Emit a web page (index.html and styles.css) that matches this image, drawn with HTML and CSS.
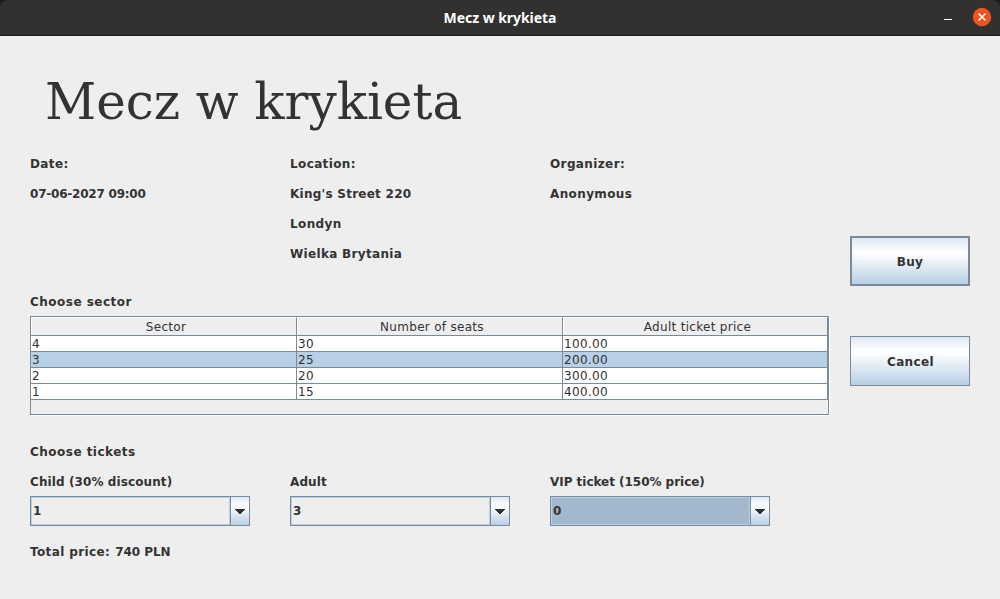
FILE: index.html
```html
<!DOCTYPE html>
<html lang="en">
<head>
<meta charset="utf-8">
<title>Mecz w krykieta</title>
<link rel="stylesheet" href="styles.css">
</head>
<body>
<div class="window">
  <header class="titlebar">
    <span class="caption">Mecz w krykieta</span>
    <div class="controls">
      <span class="minimize"></span>
      <svg class="close" width="20" height="20" viewBox="0 0 20 20"><circle cx="10" cy="10" r="9.2" fill="#e95420"/><path d="M6.5 6.5l7 7M13.5 6.5l-7 7" stroke="#fff" stroke-width="1.5" fill="none"/></svg>
    </div>
  </header>
  <main class="content">
    <section class="details">
      <h1 class="title">Mecz w krykieta</h1>
      <div class="columns info">
        <div class="column"><p>Date:</p><p class="digits">07-06-2027 09:00</p></div>
        <div class="column"><p>Location:</p><p class="street">King's Street 220</p><p>Londyn</p><p class="country">Wielka Brytania</p></div>
        <div class="column"><p>Organizer:</p><p>Anonymous</p></div>
      </div>
      <p class="heading">Choose sector</p>
      <div class="scrollpane">
        <table class="sectors">
          <colgroup><col class="wide"><col class="wide"><col></colgroup>
          <thead><tr><th>Sector</th><th>Number of seats</th><th>Adult ticket price</th></tr></thead>
          <tbody>
            <tr><td>4</td><td>30</td><td>100.00</td></tr>
            <tr class="selected"><td>3</td><td>25</td><td>200.00</td></tr>
            <tr><td>2</td><td>20</td><td>300.00</td></tr>
            <tr><td>1</td><td>15</td><td>400.00</td></tr>
          </tbody>
        </table>
      </div>
      <p class="heading">Choose tickets</p>
      <div class="columns">
        <div class="column"><p class="child">Child (30% discount)</p>
          <div class="combo"><span class="value">1</span><span class="arrow"><svg width="10" height="5" viewBox="0 0 10 5" shape-rendering="crispEdges"><path d="M0 0h10v1H9v1H8v1H7v1H6v1H4V4H3V3H2V2H1V1H0z" fill="#333"/></svg></span></div></div>
        <div class="column"><p class="adult">Adult</p>
          <div class="combo"><span class="value">3</span><span class="arrow"><svg width="10" height="5" viewBox="0 0 10 5" shape-rendering="crispEdges"><path d="M0 0h10v1H9v1H8v1H7v1H6v1H4V4H3V3H2V2H1V1H0z" fill="#333"/></svg></span></div></div>
        <div class="column"><p class="vip">VIP ticket (150% price)</p>
          <div class="combo focused"><span class="value">0</span><span class="arrow"><svg width="10" height="5" viewBox="0 0 10 5" shape-rendering="crispEdges"><path d="M0 0h10v1H9v1H8v1H7v1H6v1H4V4H3V3H2V2H1V1H0z" fill="#333"/></svg></span></div></div>
      </div>
      <div class="total"><p>Total price:</p><p class="sum">740 PLN</p></div>
    </section>
    <aside class="actions">
      <button class="button default">Buy</button>
      <button class="button">Cancel</button>
    </aside>
  </main>
</div>
</body>
</html>
```
FILE: styles.css
```css
* { box-sizing: border-box; }
body { margin: 0; background: #1b1a1a; }
.window { height: 599px; display: flex; flex-direction: column; color: #333; font: bold 12px "DejaVu Sans", sans-serif; letter-spacing: .38px; }
.titlebar { height: 36px; display: grid; grid-template-columns: 100px 1fr 100px; align-items: center; background: #333030; border-bottom: 1px solid #1b1a1a; border-radius: 8px 8px 0 0; }
.caption { grid-column: 2; text-align: center; color: #fff; font: bold 14px/35px "Noto Sans", sans-serif; letter-spacing: -.05px; }
.controls { display: flex; justify-content: flex-end; align-items: center; gap: 20px; padding-right: 8px; }
.minimize { width: 8px; height: 1px; margin-top: 4px; background: #fff; }
.close { display: block; margin-top: -1px; }
.content { flex: 1; display: flex; background: #eee; }
.details { width: 850px; padding: 32px 0 0 30px; }
.title { margin: 0 0 0 15px; height: 80px; font: 50px/68px "DejaVu Serif", serif; letter-spacing: -.05px; }
p { margin: 0; height: 30px; line-height: 32px; white-space: nowrap; }
.columns { display: flex; gap: 40px; }
.column { width: 220px; }
.info { height: 138px; }
.digits { letter-spacing: -.22px; }
.street { letter-spacing: .25px; }
.country { letter-spacing: .32px; }
.heading { letter-spacing: .48px; }
.child { letter-spacing: .1px; }
.adult { letter-spacing: .1px; }
.vip { letter-spacing: -.03px; }
.scrollpane { width: 799px; height: 99px; margin-bottom: 21px; border: 1px solid #7a8a99; box-shadow: 1px 1px #fff; }
.sectors { width: 797px; table-layout: fixed; border-collapse: separate; border-spacing: 0; font-weight: normal; }
.wide { width: 266px; }
.sectors th, .sectors td { padding: 0; border-right: 1px solid #7a8a99; border-bottom: 1px solid #7a8a99; }
.sectors th { height: 19px; padding: 1px 0 0 5px; line-height: 16px; font-weight: normal; letter-spacing: .3px; border-top: 1px solid #fff; box-shadow: inset 1px 0 #fff; }
.sectors td { height: 16px; line-height: 14px; padding: 1px 0 0 1px; background: #fff; letter-spacing: .35px; }
.sectors .selected td { background: #b8cfe5; }
.combo { display: flex; width: 220px; height: 30px; border: 1px solid #7a8a99; }
.value { flex: 1; border: 1px solid #b8cfe5; padding-left: 1px; line-height: 26px; }
.focused .value { background: #a3b8cc; }
.arrow { width: 19px; border-left: 1px solid #7a8a99; display: flex; align-items: center; justify-content: center; padding-top: 1px; }
.arrow, .button { background-image: linear-gradient(#dde8f3, #fff 30%, #fff 33%, #b8cfe5); }
.total { display: flex; gap: 5px; margin-top: 10px; }
.sum { letter-spacing: -.05px; }
.actions { width: 120px; padding-top: 200px; display: flex; flex-direction: column; gap: 50px; }
.button { width: 120px; height: 50px; padding: 2px 0 0 1px; border: 1px solid #7a8a99; color: inherit; font: inherit; letter-spacing: inherit; }
.default { border-width: 2px; padding-left: 0; }
```
